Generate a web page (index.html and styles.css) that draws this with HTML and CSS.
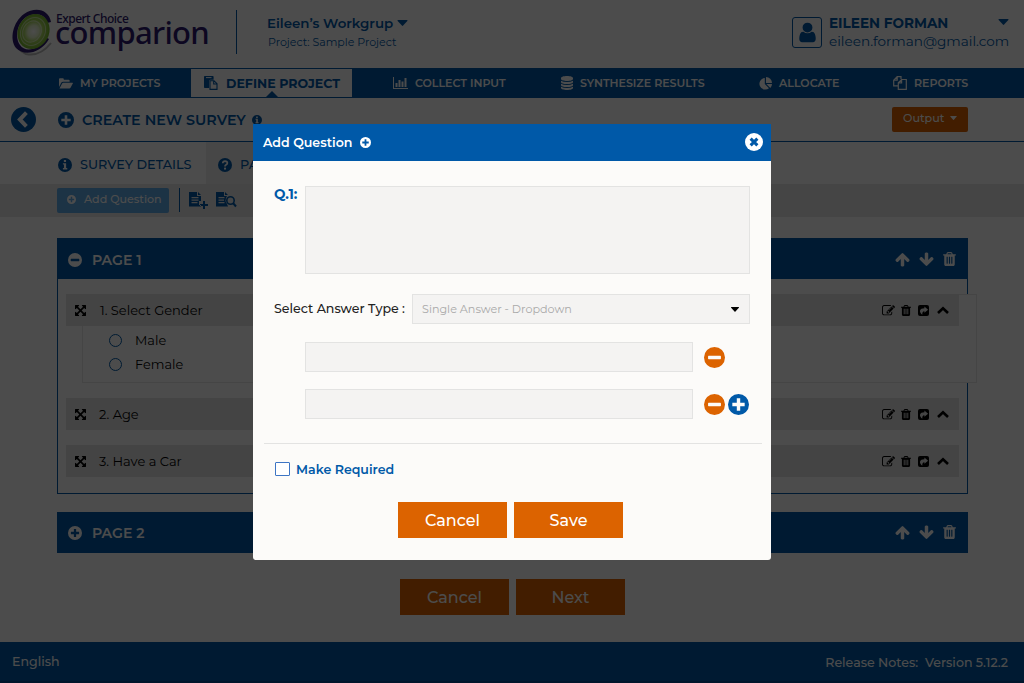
FILE: index.html
```html
<!DOCTYPE html>
<html lang="en">
<head>
<meta charset="utf-8">
<title>Comparion - Create New Survey</title>
<link rel="stylesheet" href="styles.css">
</head>
<body>
<svg class="sprite" aria-hidden="true">
  <symbol id="plus" viewBox="0 0 16 16"><path fill="currentColor" fill-rule="evenodd" d="M8 0a8 8 0 1 1 0 16A8 8 0 0 1 8 0zM6.700 3.300v3.400H3.300v2.600h3.400v3.400h2.600V9.300h3.400V6.700H9.300V3.300z"/></symbol>
  <symbol id="minus" viewBox="0 0 16 16"><path fill="currentColor" fill-rule="evenodd" d="M8 0a8 8 0 1 1 0 16A8 8 0 0 1 8 0zM3.600 6.700q-.5 0-.5.500v1.600q0 .5.500.5h8.800q.5 0 .5-.5V7.200q0-.5-.5-.5z"/></symbol>
  <symbol id="times" viewBox="0 0 16 16"><circle cx="8" cy="8" r="8" fill="currentColor"/><path d="M5 5l6 6m0-6l-6 6" stroke="#0059a8" stroke-width="2.700"/></symbol>
  <symbol id="info" viewBox="0 0 16 16"><path fill="currentColor" fill-rule="evenodd" d="M8 0a8 8 0 1 1 0 16A8 8 0 0 1 8 0zM6.700 2.300v2.300h2.500V2.300zM5.600 6v1.500h1.200v4H5.600V13h5v-1.500H9.300V6z"/></symbol>
  <symbol id="help" viewBox="0 0 16 16"><circle cx="8" cy="8" r="8" fill="currentColor"/><path d="M5.400 6q.2-2.500 2.600-2.500 2.700.1 2.700 2.300 0 1.300-1.400 2Q8 8.500 8 9.700" fill="none" stroke="#fff" stroke-width="2"/><path d="M6.900 11h2.300v2.200H6.900z" fill="#fff"/></symbol>
  <symbol id="back" viewBox="0 0 24 24"><circle cx="12" cy="12" r="12" fill="currentColor"/><path d="M14.800 5.500L8.500 12l6.300 6.500" fill="none" stroke="#fff" stroke-width="3.800"/></symbol>
  <symbol id="caret" viewBox="0 0 10 6"><path fill="currentColor" d="M.4 0h9.200q.7.200.2.900L5.600 5.600q-.6.600-1.200 0L.2.900Q-.3.200.4 0z"/></symbol>
  <symbol id="user" viewBox="0 0 1792 1792"><path fill="currentColor" d="M1536 1399q0 109-62.500 187t-150.500 78h-854q-88 0-150.500-78t-62.500-187q0-85 8.500-160.500t31.500-152 58.500-131 94-89 134.500-34.500q131 128 313 128t313-128q76 0 134.500 34.500t94 89 58.500 131 31.500 152 8.500 160.500zm-256-887q0 159-112.500 271.500t-271.500 112.500-271.500-112.500-112.500-271.500 112.500-271.500 271.500-112.500 271.500 112.500 112.500 271.500z"/></symbol>
  <symbol id="folder" viewBox="0 0 14 11"><path fill="currentColor" d="M0 9V1.200Q0 .3.900.3h3q.9 0 .9.900v.5h4.900q.9 0 .9.900v1.100H4q-1 0-1.600.8zM.5 10.500l2.600-4.900q.4-.8 1.200-.8h9.200q.7 0 .3.800l-2.300 4.100q-.4.800-1.200.8z"/></symbol>
  <symbol id="paste" viewBox="0 0 14 14"><path fill="currentColor" d="M.8 0h8q.8 0 .8.800v3H6.500q-1.400 0-1.400 1.400V12H.8Q0 12 0 11.200V.8Q0 0 .8 0z"/><path d="M2 1.600h5.500" stroke="#fff"/><path d="M6 4.700h4l3 3v5.700H6zM9.700 5v3H13" fill="none" stroke="currentColor" stroke-width="1.100"/></symbol>
  <symbol id="chart" viewBox="0 0 15 12"><path fill="currentColor" d="M0 0h1v11h14v1H0zM2.500 6h2v4h-2zM5.500 3h2v7h-2zM8.500 4.500h2V10h-2zM11.500 1h2v9h-2z"/></symbol>
  <symbol id="database" viewBox="0 0 12 14"><path fill="currentColor" d="M6 0c3.300 0 6 .9 6 2v1c0 1.100-2.700 2-6 2S0 4.100 0 3V2C0 .9 2.700 0 6 0zM0 4.700Q2 6 6 6t6-1.300v1.500c0 1-2.700 1.800-6 1.800S0 7.200 0 6.200zM0 7.700Q2 9 6 9t6-1.300v1.500c0 1-2.700 1.800-6 1.800s-6-.8-6-1.800zM0 10.700Q2 12 6 12t6-1.300V12c0 1.100-2.700 2-6 2s-6-.9-6-2z"/></symbol>
  <symbol id="pie" viewBox="0 0 13 13"><path fill="currentColor" d="M5.800 1v6l4.200 4.200A5.800 5.800 0 1 1 5.800 1zM7 0a6 6 0 0 1 6 6H7zM7.400 7H13q0 2.300-1.700 4z"/></symbol>
  <symbol id="copy" viewBox="0 0 14 14"><path d="M8 3V.7H4.200L.7 4.200v5.600h4.600M4.200.7v3.500H.7M8.600 3.500h4.700v9.800h-8V6.800zM8.600 3.500v3.300H5.300" fill="none" stroke="currentColor" stroke-width="1.200"/></symbol>
  <symbol id="doc-plus" viewBox="0 0 19 17"><path fill="currentColor" fill-rule="evenodd" d="M0 0h8v4h4v5h-2v4h2v1.500H0zM9 0l3 3H9zM2.500 5v1.200h7V5zm0 2.500v1.200h7V7.500zm0 2.500v1.200h6V10zM14 9h2v3h3v2h-3v3h-2v-3h-3v-2h3z"/></symbol>
  <symbol id="doc-find" viewBox="0 0 21 16"><path fill="currentColor" fill-rule="evenodd" d="M0 0h8v4h3l-1 2-.5 3 1.500 3 1 2.500H0zM9 0l3 3H9zM2.500 5v1.200h6V5zm0 2.500v1.200h5.500V7.500zm0 2.500v1.200h6V10z"/><circle cx="14.500" cy="8.500" r="3.700" fill="none" stroke="currentColor" stroke-width="1.600"/><path d="M17 11l3 3.500" stroke="currentColor" stroke-width="2"/></symbol>
  <symbol id="move" viewBox="128 128 1536 1536"><path fill="currentColor" d="M1411 541l-355 355 355 355 144-144q29-31 70-14 39 17 39 59v448q0 26-19 45t-45 19h-448q-42 0-59-40-17-39 14-69l144-144-355-355-355 355 144 144q31 30 14 69-17 40-59 40h-448q-26 0-45-19t-19-45v-448q0-42 40-59 39-17 69 14l144 144 355-355-355-355-144 144q-19 19-45 19-12 0-24-5-40-17-40-59v-448q0-26 19-45t45-19h448q42 0 59 40 17 39-14 69l-144 144 355 355 355-355-144-144q-31-30-14-69 17-40 59-40h448q26 0 45 19t19 45v448q0 42-39 59-13 5-25 5-26 0-45-19z"/></symbol>
  <symbol id="up" viewBox="64 100 1664 1600"><path fill="currentColor" d="M1675 971q0 51-37 90l-75 75q-38 38-91 38-54 0-90-38l-294-293v704q0 52-37.500 84.500t-90.500 32.500h-128q-53 0-90.500-32.500t-37.500-84.500v-704l-294 293q-36 38-90 38t-90-38l-75-75q-38-38-38-90 0-53 38-91l651-651q35-37 90-37 54 0 91 37l651 651q37 39 37 91z"/></symbol>
  <symbol id="trash" viewBox="192 128 1408 1536"><path fill="currentColor" d="M704 1376v-704q0-14-9-23t-23-9h-64q-14 0-23 9t-9 23v704q0 14 9 23t23 9h64q14 0 23-9t9-23zm256 0v-704q0-14-9-23t-23-9h-64q-14 0-23 9t-9 23v704q0 14 9 23t23 9h64q14 0 23-9t9-23zm256 0v-704q0-14-9-23t-23-9h-64q-14 0-23 9t-9 23v704q0 14 9 23t23 9h64q14 0 23-9t9-23zm-544-992h448l-48-117q-7-9-17-11h-317q-10 2-17 11zm928 32v64q0 14-9 23t-23 9h-96v948q0 83-47 143.500t-113 60.500h-832q-66 0-113-58.500t-47-141.500v-952h-96q-14 0-23-9t-9-23v-64q0-14 9-23t23-9h309l70-167q15-37 54-63t79-26h320q40 0 79 26t54 63l70 167h309q14 0 23 9t9 23z"/></symbol>
  <symbol id="edit" viewBox="0 120 1792 1500"><path fill="currentColor" d="M888 1184l116-116-152-152-116 116v56h96v96h56zm440-720q-16-16-33 1l-350 350q-17 17-1 33t33-1l350-350q17-17 1-33zm80 594v190q0 119-84.500 203.500t-203.500 84.500h-832q-119 0-203.500-84.500t-84.500-203.500v-832q0-119 84.500-203.500t203.500-84.500h832q63 0 117 25 15 7 18 23 3 17-9 29l-49 49q-14 14-32 8-23-6-45-6h-832q-66 0-113 47t-47 113v832q0 66 47 113t113 47h832q66 0 113-47t47-113v-126q0-13 9-22l64-64q15-15 35-7t20 29zm-96-738l288 288-672 672h-288v-288zm444 132l-92 92-288-288 92-92q28-28 68-28t68 28l152 152q28 28 28 68t-28 68z"/></symbol>
  <symbol id="share" viewBox="0 0 12 12"><rect width="12" height="12" rx="2.200" fill="currentColor"/><path d="M7 1.600l4 3.500L7 8.500V6.700Q4.400 6.600 4.700 10.600 1.600 8.500 2.300 5.800 3 3.500 7 3.500z" fill="#e6e6e6"/></symbol>
  <symbol id="chevron" viewBox="0 0 12 8"><path d="M1 7l5-4.800L11 7" fill="none" stroke="currentColor" stroke-width="2.600"/></symbol>
</svg>

<div class="page">
  <header class="header">
    <div class="logo">
      <svg class="logo-mark" viewBox="0 0 42 48">
        <defs><radialGradient id="glow"><stop offset="0" stop-color="#fff"/><stop offset=".35" stop-color="#e3f2c8"/><stop offset=".6" stop-color="#a8d75c"/><stop offset="1" stop-color="#76b82a"/></radialGradient></defs>
        <path d="M39 35Q28 49 14 46 3 41 2 27" fill="none" stroke="#bbb" stroke-width="2"/>
        <path d="M39 14C37 2 24-2 12 6 1 14-3 31 4 40c8 9 25 5 33-9l-2-1C27 42 13 45 8 37 2 28 6 13 16 8c9-4 18-1 19 7z" fill="#2d1a6e"/>
        <ellipse cx="21.500" cy="23.500" rx="15.500" ry="18" transform="rotate(28 21.500 23.500)" fill="url(#glow)"/>
        <g fill="none" stroke="#fff" stroke-opacity=".5"><ellipse cx="21" cy="23.500" rx="12" ry="14.500" transform="rotate(28 21 23.500)"/><ellipse cx="20" cy="23.500" rx="9" ry="11" transform="rotate(28 20 23.500)"/></g>
      </svg>
      <div class="logo-text"><span class="logo-top">Expert Choice</span><span class="logo-name">comparion</span></div>
    </div>
    <div class="workgroup">
      <div class="wg-name"><span>Eileen’s Workgrup</span><svg class="caret"><use href="#caret"/></svg></div>
      <div class="wg-project">Project: Sample Project</div>
    </div>
    <div class="account">
      <span class="avatar"><svg><use href="#user"/></svg></span>
      <div class="who"><div class="who-name">EILEEN FORMAN</div><div class="who-mail">eileen.forman@gmail.com</div></div>
      <svg class="who-caret"><use href="#caret"/></svg>
    </div>
  </header>

  <nav class="nav">
    <a class="n1"><svg><use href="#folder"/></svg><span>MY PROJECTS</span></a>
    <a class="n2 active"><svg><use href="#paste"/></svg><span>DEFINE PROJECT</span></a>
    <a class="n3"><svg><use href="#chart"/></svg><span>COLLECT INPUT</span></a>
    <a class="n4"><svg><use href="#database"/></svg><span>SYNTHESIZE RESULTS</span></a>
    <a class="n5"><svg><use href="#pie"/></svg><span>ALLOCATE</span></a>
    <a class="n6"><svg><use href="#copy"/></svg><span>REPORTS</span></a>
  </nav>

  <div class="titlebar">
    <svg class="back"><use href="#back"/></svg>
    <svg class="title-plus"><use href="#plus"/></svg>
    <h1>CREATE NEW SURVEY</h1>
    <svg class="title-info"><use href="#info"/></svg>
    <button class="output">Output <svg><use href="#caret"/></svg></button>
  </div>

  <div class="tabs">
    <a class="tab current"><svg><use href="#info"/></svg><span>SURVEY DETAILS</span></a>
    <a class="tab other"><svg><use href="#help"/></svg><span>PAGES</span></a>
  </div>
  <div class="toolbar">
    <button class="add"><svg><use href="#plus"/></svg><span>Add Question</span></button>
    <i class="sep"></i>
    <svg class="doc1"><use href="#doc-plus"/></svg>
    <svg class="doc2"><use href="#doc-find"/></svg>
  </div>

  <main>
    <section class="panel">
      <div class="panel-head"><svg class="toggle"><use href="#minus"/></svg><h2>PAGE 1</h2><div class="panel-tools"><svg class="arr"><use href="#up"/></svg><svg class="arr down"><use href="#up"/></svg><svg class="bin"><use href="#trash"/></svg></div></div>
      <div class="panel-body">
        <article class="question">
          <div class="q-row"><svg class="move"><use href="#move"/></svg><span class="q1">1. Select Gender</span><div class="q-tools"><svg class="edit"><use href="#edit"/></svg><svg class="del"><use href="#trash"/></svg><svg class="share"><use href="#share"/></svg><svg class="chev"><use href="#chevron"/></svg></div></div>
          <div class="choices"><label><i></i><span>Male</span></label><label><i></i><span>Female</span></label></div>
        </article>
        <article class="question">
          <div class="q-row"><svg class="move"><use href="#move"/></svg><span class="q2">2. Age</span><div class="q-tools"><svg class="edit"><use href="#edit"/></svg><svg class="del"><use href="#trash"/></svg><svg class="share"><use href="#share"/></svg><svg class="chev"><use href="#chevron"/></svg></div></div>
        </article>
        <article class="question">
          <div class="q-row"><svg class="move"><use href="#move"/></svg><span class="q3">3. Have a Car</span><div class="q-tools"><svg class="edit"><use href="#edit"/></svg><svg class="del"><use href="#trash"/></svg><svg class="share"><use href="#share"/></svg><svg class="chev"><use href="#chevron"/></svg></div></div>
        </article>
      </div>
    </section>
    <section class="panel second">
      <div class="panel-head"><svg class="toggle"><use href="#plus"/></svg><h2>PAGE 2</h2><div class="panel-tools"><svg class="arr"><use href="#up"/></svg><svg class="arr down"><use href="#up"/></svg><svg class="bin"><use href="#trash"/></svg></div></div>
    </section>
    <div class="page-actions"><button class="btn">Cancel</button><button class="btn">Next</button></div>
  </main>
  <footer class="footer"><span class="lang">English</span><span class="release">Release Notes:&nbsp; Version 5.12.2</span></footer>
</div>

<div class="overlay">
  <div class="modal" role="dialog">
    <div class="modal-head"><h3>Add Question</h3><svg class="m-plus"><use href="#plus"/></svg><svg class="m-close"><use href="#times"/></svg></div>
    <div class="modal-body">
      <div class="ask"><b>Q.1:</b><div class="field area"></div></div>
      <div class="type"><span>Select Answer Type :</span><div class="field select"><em>Single Answer - Dropdown</em><svg><use href="#caret"/></svg></div></div>
      <div class="answer"><div class="field"></div><svg class="remove"><use href="#minus"/></svg></div>
      <div class="answer"><div class="field"></div><svg class="remove"><use href="#minus"/></svg><svg class="insert"><use href="#plus"/></svg></div>
      <hr>
      <label class="required"><i></i><span>Make Required</span></label>
      <div class="modal-actions"><button class="btn">Cancel</button><button class="btn">Save</button></div>
    </div>
  </div>
</div>
</body>
</html>
```

FILE: styles.css
```css
* { box-sizing: border-box; }
body { margin: 0; font-family: Montserrat, Inter, "Open Sans", sans-serif; font-weight: 500; color: #222; }
svg { display: block; flex: none; overflow: visible; }
span, h1, h2, h3, em, b { white-space: nowrap; }
h1, h2, h3 { margin: 0; font-weight: 600; }
button { font: inherit; border: 0; padding: 0; }
.sprite { position: absolute; width: 0; height: 0; }
.page { width: 1024px; height: 683px; overflow: hidden; background: #fff; display: flex; flex-direction: column; }

.header { height: 68px; flex: none; display: flex; color: #0059a8; }
.logo { width: 237px; height: 44px; margin-top: 10px; display: flex; border-right: 1px solid #0059a8; padding-left: 12px; }
.logo-mark { width: 42px; height: 48px; margin-top: -2px; }
.logo-text { display: flex; flex-direction: column; font-family: "Noto Sans", sans-serif; font-weight: 500; color: #2d1a6e; padding-left: 1px; }
.logo-top { font-size: 12px; line-height: 14px; letter-spacing: -.5px; padding: 2px 0 0 1px; }
.logo-name { font-size: 31px; line-height: 30px; letter-spacing: -.7px; margin-top: -9px; }
.workgroup { margin: 14px 0 0 30px; }
.wg-name { display: flex; align-items: center; gap: 4px; font-size: 13.400px; font-weight: 600; line-height: 18px; }
.caret { width: 11px; height: 6px; }
.wg-project { font-size: 11px; line-height: 16px; margin: 2px 0 0 1px; font-weight: 400; }
.account { margin: 14px 15px 0 auto; display: flex; }
.avatar { width: 30px; height: 31px; margin: 3px 0 0 -1px; border: 1px solid #0059a8; border-radius: 3px; display: grid; place-items: center; }
.avatar svg { width: 23px; height: 23px; }
.who { width: 168px; margin-left: 7px; }
.who-name { font-size: 13.600px; line-height: 18px; font-weight: 700; }
.who-mail { font-size: 13.600px; line-height: 18px; font-weight: 400; }
.who-caret { width: 11px; height: 6px; margin: 5px 0 0 1px; }

.nav { height: 30px; flex: none; display: flex; background: #0059a8; color: #fff; font-size: 11.050px; font-weight: 600; }
.nav a { display: flex; align-items: center; height: 30px; }
.n1 { width: 191px; padding-left: 59px; gap: 7px; }
.n1 svg { width: 14px; height: 11px; }
.n2 { width: 162px; padding-left: 13px; gap: 8px; }
.nav .active { background: #fff; color: #0059a8; border: 1px solid #0059a8; border-left-width: 0; font-size: 12.600px; font-weight: 700; position: relative; }
.active::after { content: ""; position: absolute; left: 75px; bottom: 0; border: 6px solid transparent; border-top: 0; border-bottom-color: #0059a8; }
.n2 svg { width: 14px; height: 14px; }
.n3 { width: 207px; padding-left: 40px; gap: 7px; }
.n3 svg { width: 15px; height: 12px; }
.n4 { width: 199px; padding-left: 1px; gap: 7px; }
.n4 svg { width: 12px; height: 14px; }
.n5 { width: 134px; gap: 7px; }
.n5 svg { width: 13px; height: 13px; }
.n6 { gap: 7px; }
.n6 svg { width: 14px; height: 14px; }

.titlebar { height: 44px; flex: none; display: flex; align-items: center; border-bottom: 1px solid #0059a8; color: #0059a8; padding-left: 11px; }
.back { width: 25px; height: 25px; }
.title-plus { width: 16px; height: 16px; margin-left: 22px; }
.titlebar h1 { width: 163px; margin-left: 8px; font-size: 14.300px; }
.title-info { width: 10px; height: 10px; margin-left: 7px; }
.output { display: flex; align-items: center; gap: 6px; width: 76px; height: 25px; margin: -1px 56px 0 auto; padding: 0 0 2px 11px; border-radius: 2px; background: #dc6300; color: #fff; font-size: 11.200px; }
.output svg { width: 7px; height: 4px; }

.tabs { height: 42px; flex: none; display: flex; color: #0059a8; font-size: 12.800px; }
.tab { display: flex; align-items: center; gap: 8px; padding-top: 3px; }
.tab svg { width: 14px; height: 14px; }
.current { width: 206px; padding-left: 58px; }
.other { width: 150px; padding-left: 12px; background: #eee; }
.toolbar { height: 33px; flex: none; display: flex; align-items: center; background: #e6e6e6; padding: 0 0 1px 57px; color: #0059a8; }
.add { display: flex; align-items: center; gap: 8px; width: 112px; height: 25px; padding: 0 0 2px 10px; border-radius: 2px; background: #5eaae8; color: #fff; font-size: 11.100px; }
.toolbar .add svg { width: 9px; height: 9px; }
.sep { width: 1px; height: 24px; margin-left: 10px; background: #0059a8; }
.doc1 { width: 19px; height: 17px; margin-left: 9px; }
.doc2 { width: 21px; height: 16px; margin-left: 8px; }

main { width: 911px; margin: 21px 0 0 57px; }
.panel { height: 256px; border: 1px solid #0059a8; border-top: 0; }
.panel-head { height: 41px; margin: 0 -1px; display: flex; align-items: center; background: #0059a8; color: #fff; padding: 2px 12px 0 11px; }
.toggle { width: 14px; height: 14px; }
.panel-head h2 { margin-left: 10px; font-size: 14.100px; }
.panel-tools { display: flex; gap: 9px; margin-left: auto; }
.arr { width: 15px; height: 15px; }
.down { transform: rotate(180deg); }
.bin { width: 13px; height: 14px; }
.panel-body { padding: 15px 8px 0; display: flex; flex-direction: column; gap: 16px; }
.q-row { height: 32px; display: flex; align-items: center; background: #e4e4e4; padding: 0 10px 0 9px; color: #000; font-size: 13px; font-weight: 400; position: relative; z-index: 1; }
.move { width: 11px; height: 11px; }
.q-row span { margin-left: 13px; }
.q-row .q1 { margin-left: 14px; }
.q-tools { margin-left: auto; display: flex; align-items: center; }
.edit { width: 13px; height: 11px; }
.del { width: 10px; height: 11px; margin-left: 6px; }
.share { width: 11px; height: 11px; margin-left: 7px; }
.chev { width: 12px; height: 8px; margin-left: 8px; }
.question { position: relative; }
.choices { width: 895px; height: 89px; margin: -32px -19px -1px 16px; padding: 34px 0 0 26px; border: 1px solid #e8e8e8; background: #fff; font-size: 12.900px; font-weight: 400; color: #000; }
.choices label { display: flex; align-items: center; gap: 13px; height: 23.500px; }
.choices i { width: 13px; height: 13px; border: 1px solid #0059a8; border-radius: 50%; }
.question + .question + .question { margin-top: -1px; }
.second { height: 41px; border: 0; margin-top: 18px; }
.second .panel-head { margin: 0; padding-top: 0; }
.page-actions { display: flex; gap: 7px; margin: 26px 0 0 343px; }
.btn { width: 109px; height: 36px; background: #dc6300; color: #fff; font-size: 16px; }
.footer { height: 41px; flex: none; margin-top: auto; display: flex; justify-content: space-between; padding: 0 16px 0 12px; background: #0059a8; border-bottom: 2px solid #004a94; color: #fff; font-size: 12.600px; line-height: 40px; }
.release { padding-top: 1px; }

.overlay { position: fixed; inset: 0; z-index: 10; background: rgba(0, 0, 0, .7); }
.modal { width: 518px; height: 436px; margin: 124px 0 0 253px; background: #fcfbf9; border-radius: 0 0 3px 3px; }
.modal-head { height: 37px; display: flex; align-items: center; background: #0059a8; color: #fff; padding: 0 8px 0 10px; }
.modal-head h3 { width: 90px; font-size: 12.600px; }
.m-plus { width: 11px; height: 11px; margin-left: 7px; }
.m-close { width: 18px; height: 18px; margin: -1px 0 0 auto; }
.modal-body { padding: 25px 9px 0 11px; }
.ask { display: flex; padding-left: 10px; }
.ask b { width: 31px; color: #0059a8; font-size: 13.600px; line-height: 16px; font-weight: 700; }
.field { width: 388px; height: 30px; background: #f4f3f2; border: 1px solid #e3e3e2; }
.area { width: 445px; height: 88px; }
.type { display: flex; align-items: center; padding-left: 10px; margin-top: 20px; }
.type > span { width: 138px; font-size: 12.600px; padding-bottom: 1px; }
.select { width: 338px; display: flex; align-items: center; justify-content: space-between; padding: 0 10px 0 9px; }
.select em { font-style: normal; font-weight: 400; font-size: 11.200px; color: #a9a9a9; }
.select svg { width: 8px; height: 5px; color: #000; }
.answer { display: flex; align-items: center; margin: 18px 0 0 41px; }
.answer + .answer { margin-top: 17px; }
.remove { width: 21px; height: 21px; margin: 1px 0 0 11px; color: #dc6300; }
.insert { width: 21px; height: 21px; margin-left: 3px; color: #0059a8; }
hr { margin: 24px 0 0; border: 0; border-top: 1px solid #e3e3e2; }
.required { display: flex; align-items: center; gap: 6px; height: 18px; margin: 16px 0 0 11px; color: #0059a8; font-size: 12.600px; font-weight: 600; }
.required i { width: 15px; height: 14px; background: #fff; border: 1px solid #3d75c4; border-radius: 1px; }
.modal-actions { display: flex; gap: 7px; margin: 24px 0 0 134px; }
```
